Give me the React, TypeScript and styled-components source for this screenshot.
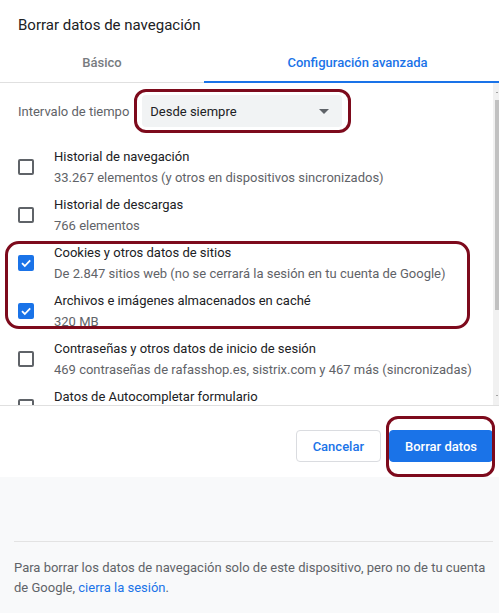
import React from "react";
import styled, { createGlobalStyle } from "styled-components";

const Global = createGlobalStyle`
  html, body { margin: 0; padding: 0; background: #ffffff; }
  body { font-family: Roboto, "Liberation Sans", Arial, sans-serif; -webkit-font-smoothing: antialiased; }
  * { box-sizing: border-box; }
`;

const Page = styled.div`
  width: 499px;
  height: 613px;
  display: flex;
  flex-direction: column;
  overflow: hidden;
  background: #ffffff;
`;

const Dialog = styled.div`
  display: flex;
  flex-direction: column;
  background: #ffffff;
`;

const Title = styled.h1`
  margin: 0;
  padding: 15px 18px 0;
  height: 42px;
  font-size: 15px;
  line-height: 20px;
  font-weight: 400;
  color: #202124;
`;

const TabBar = styled.div`
  display: flex;
  height: 41px;
  border-bottom: 1px solid #e0e0e0;
`;

const Tab = styled.div<{ $active?: boolean; $grow?: boolean }>`
  flex: ${(p) => (p.$grow ? "1 1 auto" : "0 0 204px")};
  display: flex;
  align-items: center;
  justify-content: center;
  padding-left: ${(p) => (p.$grow ? "12px" : "0")};
  font-size: 13px;
  font-weight: 500;
  color: ${(p) => (p.$active ? "#1a73e8" : "#777b80")};
  border-bottom: 2px solid ${(p) => (p.$active ? "#1a73e8" : "transparent")};
  margin-bottom: -1px;
  padding-top: 1px;
`;

const ScrollArea = styled.div`
  height: 322px;
  display: flex;
`;

const Viewport = styled.div`
  flex: 1 1 auto;
  overflow: hidden;
  padding-top: 12px;
`;

const ScrollTrack = styled.div`
  flex: 0 0 6px;
  background: #f1f1f1;
  display: flex;
  flex-direction: column;
  justify-content: space-between;
  align-items: flex-end;
  padding: 9px 0 9px;
`;

const ArrowDot = styled.span`
  width: 2px;
  height: 1px;
  margin-right: 1px;
  background: #a3a3a3;
`;

const Thumb = styled.span`
  width: 4px;
  height: 210px;
  background: #c1c1c1;
  margin-bottom: auto;
  margin-top: 7px;
`;

const IntervalRow = styled.div`
  display: flex;
  align-items: center;
  height: 32px;
  margin: 0 0 16px;
  padding-left: 18px;
  gap: 13px;
`;

const Label = styled.span`
  font-size: 13px;
  color: #5f6368;
`;

const Marked = styled.div`
  position: relative;
`;

const Annotation = styled.div<{ $t: number; $r: number; $b: number; $l: number; $radius: number }>`
  position: absolute;
  top: ${(p) => p.$t}px;
  right: ${(p) => p.$r}px;
  bottom: ${(p) => p.$b}px;
  left: ${(p) => p.$l}px;
  border: 3px solid #7d0a1c;
  border-radius: ${(p) => p.$radius}px;
  pointer-events: none;
`;

const Select = styled.div`
  width: 200px;
  height: 32px;
  background: #f1f3f4;
  border-radius: 4px;
  display: flex;
  align-items: center;
  justify-content: space-between;
  padding: 0 8px 0 8px;
  font-size: 13px;
  color: #202124;
`;

const Caret = styled.span`
  width: 0;
  height: 0;
  border-left: 5px solid transparent;
  border-right: 5px solid transparent;
  border-top: 5px solid #5f6368;
  margin-right: 5px;
`;

const Row = styled.div`
  display: flex;
  align-items: center;
  height: 48px;
  padding-left: 18px;
`;

const Box = styled.span<{ $checked?: boolean }>`
  flex: 0 0 16px;
  width: 16px;
  height: 16px;
  border-radius: 2px;
  border: 2px solid ${(p) => (p.$checked ? "#1a73e8" : "#5f6368")};
  background: ${(p) => (p.$checked ? "#1a73e8" : "transparent")};
  display: flex;
  align-items: center;
  justify-content: center;
  margin-right: 20px;
`;

const Texts = styled.div`
  display: flex;
  flex-direction: column;
  white-space: nowrap;
`;

const ItemTitle = styled.span`
  font-size: 13px;
  line-height: 20px;
  color: #202124;
`;

const ItemSub = styled.span`
  font-size: 13px;
  line-height: 20px;
  margin-top: 1px;
  color: #5f6368;
`;

const Footer = styled.div`
  border-top: 1px solid #e0e0e0;
  height: 72px;
  display: flex;
  justify-content: flex-end;
  align-items: flex-start;
  gap: 8px;
  padding: 24px 6px 0 0;
`;

const Button = styled.button<{ $primary?: boolean }>`
  height: 32px;
  padding: 0 ${(p) => (p.$primary ? "15px" : "16px")};
  border-radius: 4px;
  font-family: inherit;
  font-size: 13px;
  font-weight: 500;
  border: 1px solid ${(p) => (p.$primary ? "#1a73e8" : "#dadce0")};
  background: ${(p) => (p.$primary ? "#1a73e8" : "#ffffff")};
  color: ${(p) => (p.$primary ? "#ffffff" : "#1a73e8")};
`;

const Note = styled.div`
  flex: 1;
  background: #f8f9fa;
  padding: 64px 6px 0 14px;
`;

const Divider = styled.div`
  border-top: 1px solid #e3e3e3;
`;

const NoteText = styled.p`
  margin: 16px 0 0;
  font-size: 13px;
  line-height: 20px;
  color: #5f6368;
`;

const Link = styled.a`
  color: #1a73e8;
  text-decoration: none;
`;

const Check = () => (
  <svg width="12" height="12" viewBox="0 0 12 12">
    <path d="M2 6.2 L4.8 9 L10.2 3.4" fill="none" stroke="#ffffff" strokeWidth="1.8" />
  </svg>
);

type Item = { title: string; sub: string; checked?: boolean };

const before: Item[] = [
  { title: "Historial de navegación", sub: "33.267 elementos (y otros en dispositivos sincronizados)" },
  { title: "Historial de descargas", sub: "766 elementos" },
];
const marked: Item[] = [
  { title: "Cookies y otros datos de sitios", sub: "De 2.847 sitios web (no se cerrará la sesión en tu cuenta de Google)", checked: true },
  { title: "Archivos e imágenes almacenados en caché", sub: "320 MB", checked: true },
];
const after: Item[] = [
  { title: "Contraseñas y otros datos de inicio de sesión", sub: "469 contraseñas de rafasshop.es, sistrix.com y 467 más (sincronizadas)" },
  { title: "Datos de Autocompletar formulario", sub: "Más de 200 sugerencias (sincronizadas)" },
];

const ItemRow = ({ item }: { item: Item }) => (
  <Row>
    <Box $checked={item.checked}>{item.checked && <Check />}</Box>
    <Texts>
      <ItemTitle>{item.title}</ItemTitle>
      <ItemSub>{item.sub}</ItemSub>
    </Texts>
  </Row>
);

export default function App() {
  return (
    <Page>
      <Global />
      <Dialog>
        <Title>Borrar datos de navegación</Title>
        <TabBar>
          <Tab>Básico</Tab>
          <Tab $active $grow>Configuración avanzada</Tab>
        </TabBar>
        <ScrollArea>
          <Viewport>
            <IntervalRow>
              <Label>Intervalo de tiempo</Label>
              <Marked>
                <Select>
                  <span>Desde siempre</span>
                  <Caret />
                </Select>
                <Annotation $t={-6} $r={-9} $b={-6} $l={-8} $radius={12} />
              </Marked>
            </IntervalRow>
            {before.map((it) => (
              <ItemRow key={it.title} item={it} />
            ))}
            <Marked>
              {marked.map((it) => (
                <ItemRow key={it.title} item={it} />
              ))}
              <Annotation $t={2} $r={23} $b={6} $l={5} $radius={14} />
            </Marked>
            {after.map((it) => (
              <ItemRow key={it.title} item={it} />
            ))}
          </Viewport>
          <ScrollTrack>
            <ArrowDot />
            <Thumb />
            <ArrowDot />
          </ScrollTrack>
        </ScrollArea>
        <Footer>
          <Button>Cancelar</Button>
          <Marked>
            <Button $primary>Borrar datos</Button>
            <Annotation $t={-14} $r={-2} $b={-15} $l={-3} $radius={12} />
          </Marked>
        </Footer>
      </Dialog>
      <Note>
        <Divider />
        <NoteText>
          Para borrar los datos de navegación solo de este dispositivo, pero no de tu cuenta de Google,{" "}
          <Link href="#">cierra la sesión</Link>.
        </NoteText>
      </Note>
    </Page>
  );
}
